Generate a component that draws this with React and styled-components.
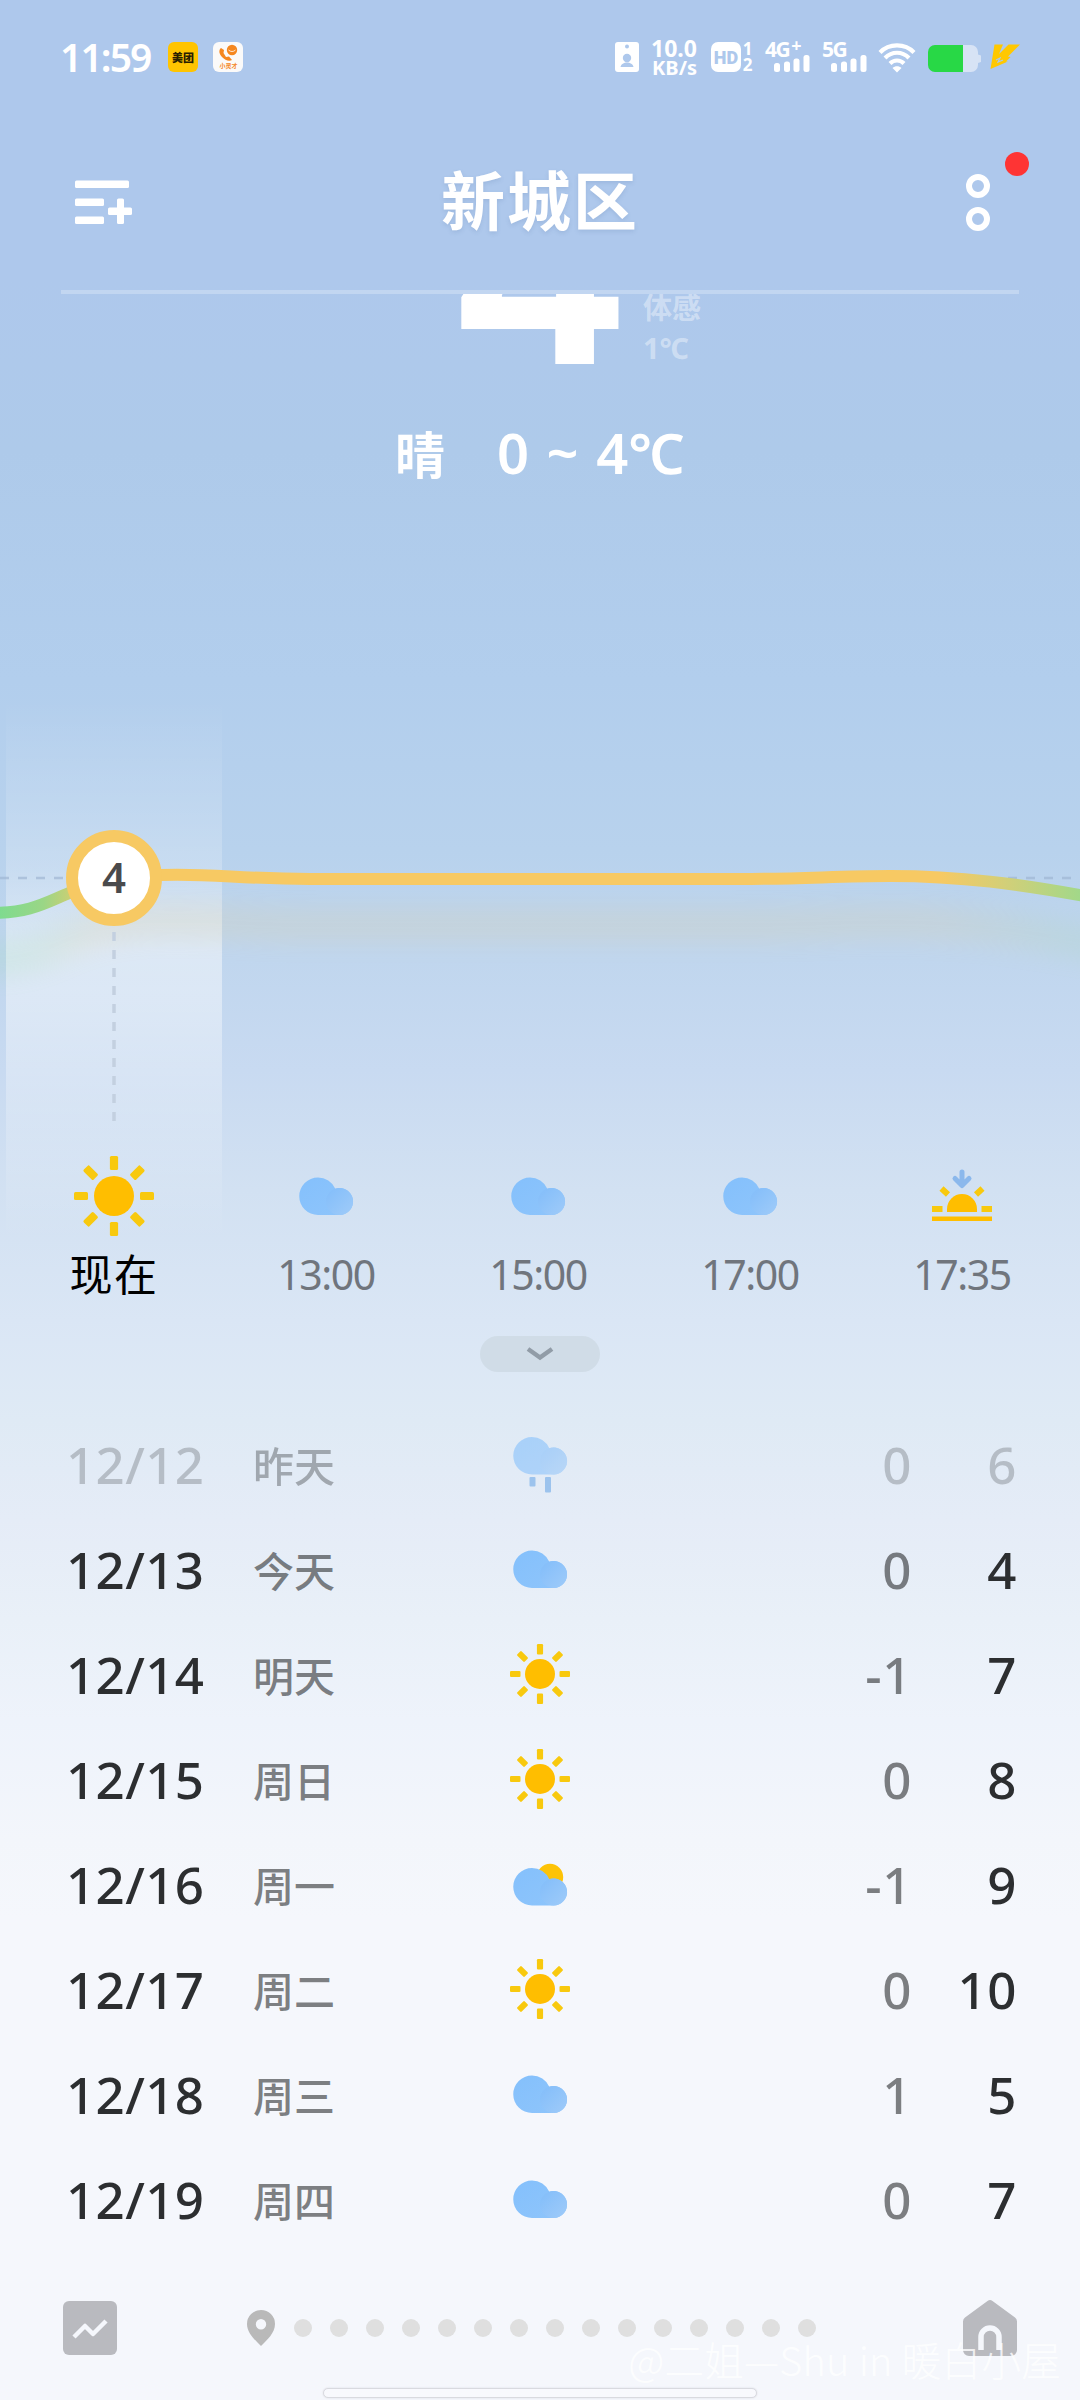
import styled, { createGlobalStyle } from 'styled-components';

const GlobalStyle = createGlobalStyle`
  * { box-sizing: border-box; }

  body {
    margin: 0;
    font-family: 'Noto Sans', 'Noto Sans CJK SC', sans-serif;
  }

  svg { display: block; }
`;

const Page = styled.main`
  position: relative;
  display: flex;
  flex-direction: column;
  width: 1080px;
  height: 2400px;
  overflow: hidden;
  background: linear-gradient(
    #aec8ec 0,
    #aec8ec 280px,
    #aecaea 450px,
    #b2ceed 680px,
    #b8d2ed 850px,
    #c0d6ee 960px,
    #c8daf1 1070px,
    #d2e1f2 1190px,
    #dae6f5 1320px,
    #dfeaf5 1420px,
    #e5ecf7 1520px,
    #e9f0f8 1620px,
    #eef3fb 1720px,
    #f3f6fb 1840px,
    #f5f7fc 1920px
  );
`;

/* status bar */

const StatusBar = styled.div`
  display: flex;
  flex: none;
  align-items: flex-start;
  height: 114px;
  padding: 38px 60px 0;
  color: #fff;
`;

const Clock = styled.span`
  width: 108px;
  font-size: 39px;
  font-weight: 600;
  line-height: 38px;
  letter-spacing: -1.9px;
  white-space: nowrap;
`;

const AppBadge = styled.span`
  display: flex;
  align-items: center;
  justify-content: center;
  width: 30px;
  height: 30px;
  margin: 4px 15px 0 0;
  border-radius: 6px;
  background: ${({ $color }) => $color};
  color: #2a2000;
  font-size: 11px;
  font-weight: 900;
  line-height: 1;
`;

const StatusIcons = styled.div`
  display: flex;
  flex: none;
  align-items: flex-start;
  height: 40px;
  margin-left: auto;

  > * { flex: none; }
`;

const NetSpeed = styled.div`
  display: flex;
  flex-direction: column;
  align-items: flex-end;
  width: 58px;
  font-weight: 700;
  white-space: nowrap;

  span:first-child {
    font-size: 23px;
    line-height: 20px;
  }

  span:last-child {
    font-size: 20px;
    line-height: 19px;
  }
`;

const HdBadge = styled.div`
  width: 30px;
  height: 30px;
  margin: 4px 1px 0 14px;
  border-radius: 7px;
  background: #fff;
  color: #aec8ec;
  font-family: Roboto, sans-serif;
  font-size: 18px;
  font-weight: 900;
  line-height: 31px;
  text-align: center;
`;

const SimNumbers = styled.div`
  display: flex;
  flex-direction: column;
  align-items: center;
  width: 11px;
  padding-top: 3px;
  font-size: 17px;
  font-weight: 700;
  line-height: 16px;
`;

const Signal = styled.div`
  width: 45px;
  margin-left: 12px;

  svg { margin: -6px 0 0 9px; }
`;

const SignalLabel = styled.div`
  display: flex;
  height: 23px;
  font-size: 21px;
  font-weight: 700;
  line-height: 23px;
  letter-spacing: -1.5px;

  sup {
    margin: -4px 0 0 2px;
    font-size: 18px;
    line-height: 23px;
  }
`;

const WifiIcon = styled.svg`
  margin: 0 3px 0 11px;
`;

/* header */

const Header = styled.header`
  display: grid;
  flex: none;
  grid-template-columns: 60px 1fr 60px;
  align-items: center;
  height: 176px;
  padding: 0 72px;
`;

const Title = styled.h1`
  margin: -3px 0 0;
  color: #fff;
  font-size: 64px;
  font-weight: 700;
  line-height: 80px;
  letter-spacing: 2px;
  text-align: center;
  text-shadow: 0 2px 4px rgba(80, 110, 160, 0.18);
`;

const MenuButton = styled.div`
  position: relative;
  display: flex;
  justify-content: flex-end;
  padding: 2px 18px 0 0;
`;

const RedDot = styled.i`
  position: absolute;
  top: -20px;
  right: -21px;
  width: 24px;
  height: 24px;
  border-radius: 50%;
  background: #fe3434;
`;

const Divider = styled.div`
  flex: none;
  height: 4px;
  margin: 0 61px;
  background: rgba(255, 255, 255, 0.25);
`;

/* current weather */

const Current = styled.section`
  flex: none;
  height: 406px;
  overflow: hidden;
  color: #fff;
`;

const CurrentTemp = styled.div`
  display: flex;
  height: 106px;
  padding-left: 448px;
`;

const BigDegree = styled.span`
  width: 195px;
  margin-top: -178px;
  font-family: Inter, sans-serif;
  font-size: 270px;
  font-weight: 700;
  line-height: 300px;
`;

const FeelsLike = styled.div`
  margin-top: -6px;
  color: rgba(255, 255, 255, 0.4);
  font-size: 29px;
  font-weight: 700;
  line-height: 40px;
`;

const Summary = styled.div`
  display: flex;
  align-items: baseline;
  padding-left: 395px;
  font-size: 56px;
  font-weight: 600;
  line-height: 104px;
  white-space: pre;
  word-spacing: 3px;
`;

const SummaryText = styled.span`
  width: 102px;
  font-size: 50px;
`;

/* hourly */

const Hourly = styled.section`
  position: relative;
  flex: none;
  height: 636px;
`;

const NowHighlight = styled.div`
  position: absolute;
  top: 0;
  left: 6px;
  width: 216px;
  height: 540px;
  background: linear-gradient(
    rgba(255, 255, 255, 0) 0,
    rgba(255, 255, 255, 0.22) 170px,
    rgba(255, 255, 255, 0.45) 250px,
    rgba(255, 255, 255, 0.42) 300px,
    rgba(255, 255, 255, 0) 540px
  );
`;

const Chart = styled.svg`
  position: relative;
`;

const Hours = styled.div`
  position: relative;
  display: grid;
  grid-template-columns: repeat(5, 212px);
  padding-left: 8px;
`;

const Hour = styled.div`
  display: flex;
  flex-direction: column;
  align-items: center;
  color: ${({ $now }) => ($now ? '#000' : '#70757d')};
  font-size: ${({ $now }) => ($now ? 43 : 41)}px;
  line-height: 77px;
  letter-spacing: ${({ $now }) => ($now ? 1.5 : -1.5)}px;
`;

const Expand = styled.div`
  display: flex;
  flex: none;
  align-items: center;
  justify-content: center;
  width: 120px;
  height: 36px;
  margin: 0 auto 42px;
  border-radius: 18px;
  background: #d0dce7;
`;

/* daily */

const Daily = styled.section`
  flex: none;
`;

const Day = styled.div`
  display: grid;
  grid-template-columns: 187px 247px 80px 332px 105px;
  align-items: center;
  height: 105px;
  padding-left: 66px;
  color: #2c2e30;
  font-size: 51px;
  font-weight: 500;
  line-height: 60px;
`;

const DayDate = styled.span`
  margin-top: -5px;
  letter-spacing: 0.4px;
  opacity: ${({ $past }) => ($past ? 0.24 : 1)};
`;

const Weekday = styled.span`
  margin-top: -1px;
  color: rgba(44, 46, 48, 0.6);
  font-size: 41px;
  opacity: ${({ $past }) => ($past ? 0.6 : 1)};
`;

const DayIcon = styled.div`
  margin-top: -6px;
  opacity: ${({ $past }) => ($past ? 0.6 : 1)};
`;

const Degree = styled.span`
  margin-top: -5px;
  text-align: right;
  letter-spacing: 0.6px;
`;

const Low = styled(Degree)`
  opacity: ${({ $past }) => ($past ? 0.24 : 0.6)};
`;

const High = styled(Degree)`
  opacity: ${({ $past }) => ($past ? 0.24 : 1)};
`;

/* footer */

const Footer = styled.footer`
  display: flex;
  flex: none;
  align-items: center;
  height: 148px;
  padding: 0 63px;
`;

const Pager = styled.div`
  display: flex;
  align-items: center;
  gap: 18px;
  margin: 0 auto 0 130px;

  svg { margin-right: 1px; }
`;

const PageDot = styled.i`
  width: 18px;
  height: 18px;
  border-radius: 50%;
  background: #dfdfdf;
`;

const GestureBar = styled.div`
  position: absolute;
  bottom: 2px;
  left: 323px;
  width: 434px;
  height: 10px;
  border: 1px solid #d9dae0;
  border-radius: 5px;
  background: #f8f9fd;
  box-shadow: 0 0 2px #d9dae0;
`;

const Watermark = styled.div`
  position: absolute;
  right: 19px;
  bottom: 13px;
  color: rgba(255, 255, 255, 0.8);
  font-family: 'Noto Sans CJK SC', sans-serif;
  font-size: 39.5px;
  font-weight: 300;
  line-height: 56px;
  letter-spacing: 0.3px;
  white-space: nowrap;
`;

function Sun({ scale = 1 }) {
  return (
    <g transform={`translate(40 40) scale(${scale})`}>
      <circle r="20" fill="#ffbe00" />
      {[0, 45, 90, 135, 180, 225, 270, 315].map((angle) => (
        <rect
          key={angle}
          x="-4.1"
          y="-40"
          width="8.2"
          height="14"
          rx="1.5"
          fill="#f8c90e"
          transform={`rotate(${angle})`}
        />
      ))}
    </g>
  );
}

function Cloud({ y = 21.5 }) {
  return (
    <g transform={`translate(13 ${y})`}>
      <path
        d="M19 0A19 19 0 0 1 36.300 11.200A13.500 13.500 0 1 1 40.500 37.500H19A18.750 18.750 0 0 1 19 0Z"
        fill="url(#cloud)"
      />
      <circle cx="40.500" cy="24" r="13.500" fill="url(#puff)" />
    </g>
  );
}

function WeatherIcon({ type }) {
  return (
    <svg width="80" height="80" viewBox="0 0 80 80">
      {type === 'sun' && <Sun />}
      {type === 'sunSmall' && <Sun scale={0.75} />}
      {type === 'cloud' && <Cloud />}
      {type === 'partly' && (
        <>
          <circle cx="50" cy="33" r="13.200" fill="#fdc307" />
          <Cloud y={24} />
        </>
      )}
      {type === 'rain' && (
        <>
          <Cloud y={13} />
          <rect x="29.500" y="53" width="6" height="9.500" rx="1" fill="#6ea9e8" />
          <rect x="45" y="53" width="6" height="15.500" rx="1" fill="#6ea9e8" />
        </>
      )}
      {type === 'sunset' && (
        <>
          <path
            d="M40 16v13M33 22.500l7 7 7-7"
            fill="none"
            stroke="#8bb8ec"
            strokeWidth="5"
            strokeLinecap="round"
            strokeLinejoin="round"
          />
          <path d="M25 56v-3a15 15 0 0 1 30 0v3z" fill="#ffbe00" />
          <path d="M10 60.500h60v4.500H10z" fill="#ffbe00" />
          <path d="M10 50h10.500v6H10zM59.500 50h10.500v6H59.500z" fill="#f8c90e" />
          <path d="M19.500 32.500l6.500 6M60.500 32.500l-6.500 6" stroke="#f8c90e" strokeWidth="6" />
        </>
      )}
    </svg>
  );
}

const hours = [
  { label: '现在', icon: 'sun', now: true },
  { label: '13:00', icon: 'cloud' },
  { label: '15:00', icon: 'cloud' },
  { label: '17:00', icon: 'cloud' },
  { label: '17:35', icon: 'sunset' },
];

const days = [
  { date: '12/12', name: '昨天', icon: 'rain', low: 0, high: 6, past: true },
  { date: '12/13', name: '今天', icon: 'cloud', low: 0, high: 4 },
  { date: '12/14', name: '明天', icon: 'sunSmall', low: -1, high: 7 },
  { date: '12/15', name: '周日', icon: 'sunSmall', low: 0, high: 8 },
  { date: '12/16', name: '周一', icon: 'partly', low: -1, high: 9 },
  { date: '12/17', name: '周二', icon: 'sunSmall', low: 0, high: 10 },
  { date: '12/18', name: '周三', icon: 'cloud', low: 1, high: 5 },
  { date: '12/19', name: '周四', icon: 'cloud', low: 0, high: 7 },
];

const CURVE =
  'M-60 213H-10C30 213 45 203 69 193C95 182 120 176 160 175C210 173 240 179 310 179H740C800 179 840 176 890 176C960 176 1020 184 1090 197L1150 207';

function SignalBars() {
  return (
    <svg width="36" height="17" viewBox="0 0 36 17" fill="#fff">
      <rect x="0" y="8" width="6" height="9" rx="2.500" />
      <rect x="10" y="6.500" width="6" height="10.500" rx="2.500" />
      <rect x="19.500" y="3.500" width="6" height="13.500" rx="2.500" />
      <rect x="29.500" y="0" width="6" height="17" rx="2.500" />
    </svg>
  );
}

function TemperatureChart() {
  return (
    <Chart width="1080" height="456" viewBox="0 0 1080 456" fill="none">
      <defs>
        <linearGradient id="temp" gradientUnits="userSpaceOnUse" x1="0" y1="0" x2="1080" y2="0">
          <stop offset="0" stopColor="#7fdb8f" />
          <stop offset="0.04" stopColor="#9ad686" />
          <stop offset="0.09" stopColor="#f7c963" />
          <stop offset="0.87" stopColor="#f7c963" />
          <stop offset="0.93" stopColor="#d3cf78" />
          <stop offset="1" stopColor="#a2d889" />
        </linearGradient>
        <linearGradient id="cloud" x1="0" y1="0" x2="1" y2="1">
          <stop offset="0" stopColor="#84c0fc" />
          <stop offset="1" stopColor="#8fc5fb" />
        </linearGradient>
        <linearGradient id="puff" x1="0" y1="0" x2="1" y2="1">
          <stop offset="0" stopColor="#82bdfa" />
          <stop offset="1" stopColor="#9fcbf9" />
        </linearGradient>
        <filter id="glow" filterUnits="userSpaceOnUse" x="-100" y="120" width="1280" height="240">
          <feGaussianBlur stdDeviation="11" />
        </filter>
      </defs>
      <path
        d={CURVE}
        stroke="url(#temp)"
        strokeWidth="36"
        opacity="0.12"
        filter="url(#glow)"
        transform="translate(0 46)"
      />
      <path d="M0 178H66M1008 178H1080" stroke="#9fb6d3" strokeWidth="2.500" strokeDasharray="9 9" opacity="0.7" />
      <path d="M114 232V422" stroke="#c3d0e0" strokeWidth="3.500" strokeDasharray="9 9" />
      <path d={CURVE} stroke="url(#temp)" strokeWidth="12" />
      <circle cx="114" cy="178" r="42" fill="#fff" stroke="#f7c963" strokeWidth="12" />
      <text x="114" y="193" textAnchor="middle" fill="#4a4a4c" fontSize="42" fontWeight="600">
        4
      </text>
    </Chart>
  );
}

export default function App() {
  return (
    <Page>
      <GlobalStyle />
      <StatusBar>
        <Clock>11:59</Clock>
        <AppBadge $color="#ffc400">美团</AppBadge>
        <AppBadge $color="#fbfaf9">
          <svg width="30" height="30" viewBox="0 0 30 30">
            <path d="M8 6c-2.500 2-2 6 1 9s7 5 10 3l-3-3.500-3 .5-2.500-4 .5-3z" fill="#f5871f" />
            <circle cx="19" cy="8" r="5.200" fill="#f5871f" />
            <path d="M15.500 8c2 2 5 2 7 0" stroke="#fff" strokeWidth="0.800" fill="none" />
            <text x="15.500" y="25.500" textAnchor="middle" fontSize="6" fontWeight="700" fill="#f5871f">
              小灵才
            </text>
          </svg>
        </AppBadge>
        <StatusIcons>
          <svg width="24" height="38" viewBox="0 0 24 38">
            <rect y="4" width="24" height="30" rx="3" fill="#fff" />
            <g fill="#aec8ec">
              <circle cx="12" cy="8.500" r="2" />
              <circle cx="12" cy="20" r="4.200" />
              <path d="M5.500 29c1-6 12-6 13 0z" />
            </g>
          </svg>
          <NetSpeed>
            <span>10.0</span>
            <span>KB/s</span>
          </NetSpeed>
          <HdBadge>HD</HdBadge>
          <SimNumbers>
            <span>1</span>
            <span>2</span>
          </SimNumbers>
          <Signal>
            <SignalLabel>
              4G<sup>+</sup>
            </SignalLabel>
            <SignalBars />
          </Signal>
          <Signal>
            <SignalLabel>5G</SignalLabel>
            <SignalBars />
          </Signal>
          <WifiIcon width="38" height="38" viewBox="0 0 38 38" fill="none" stroke="#fff" strokeWidth="4.200">
            <path d="M2 14.500C11 5 27 5 36 14.500" />
            <path d="M7 20C14 13 24 13 31 20" />
            <path d="M12 25.500C16 21.500 22 21.500 26 25.500" />
            <path d="M14.500 30c2.500-2.500 6.500-2.500 9 0L19 34.500z" fill="#fff" stroke="none" />
          </WifiIcon>
          <svg width="101" height="38" viewBox="0 0 101 38">
            <path d="M44 7h8a7 7 0 0 1 7 7v2.500l3 1v6.500l-3 1v2a7 7 0 0 1-7 7h-8z" fill="#d7e3f5" />
            <path d="M16 7h28v27H16a7 7 0 0 1-7-7V14a7 7 0 0 1 7-7z" fill="#28d846" />
            <path
              d="M75.500 6.500h8.500l-4 9.500 9.500-9.500h11.500l-12 12 2.500.5-4.500 4.500h2L71.500 31z"
              fill="#ffc800"
            />
            <path d="M77 22l4-2-2 4 5-2" fill="none" stroke="#aec8ec" strokeWidth="1.200" />
          </svg>
        </StatusIcons>
      </StatusBar>

      <Header>
        <svg width="60" height="48" viewBox="0 0 60 48" fill="#fff">
          <rect x="3" y="2.500" width="54" height="7.500" rx="1.500" />
          <rect x="3" y="20.500" width="29" height="7.500" rx="1.500" />
          <rect x="3" y="38.500" width="29" height="7.500" rx="1.500" />
          <rect x="36" y="29.500" width="24" height="7.500" rx="1.500" />
          <rect x="45" y="20.500" width="7" height="25.500" rx="1.500" />
        </svg>
        <Title>新城区</Title>
        <MenuButton>
          <svg width="24" height="58" viewBox="0 0 24 58" fill="none" stroke="#fff" strokeWidth="6">
            <circle cx="12" cy="12" r="9" />
            <circle cx="12" cy="45" r="9" />
          </svg>
          <RedDot />
        </MenuButton>
      </Header>
      <Divider />

      <Current>
        <CurrentTemp>
          <BigDegree>4</BigDegree>
          <FeelsLike>
            体感
            <br />
            1℃
          </FeelsLike>
        </CurrentTemp>
        <Summary>
          <SummaryText>晴</SummaryText>0 ~ 4℃
        </Summary>
      </Current>

      <Hourly>
        <NowHighlight />
        <TemperatureChart />
        <Hours>
          {hours.map(({ label, icon, now }) => (
            <Hour key={label} $now={now}>
              <WeatherIcon type={icon} />
              {label}
            </Hour>
          ))}
        </Hours>
      </Hourly>

      <Expand>
        <svg width="30" height="16" viewBox="0 0 30 16" fill="none" stroke="#919ca7" strokeWidth="4.500">
          <path d="M3 3l12 8.500L27 3" />
        </svg>
      </Expand>

      <Daily>
        {days.map(({ date, name, icon, low, high, past }) => (
          <Day key={date}>
            <DayDate $past={past}>{date}</DayDate>
            <Weekday $past={past}>{name}</Weekday>
            <DayIcon $past={past}>
              <WeatherIcon type={icon} />
            </DayIcon>
            <Low $past={past}>{low}</Low>
            <High $past={past}>{high}</High>
          </Day>
        ))}
      </Daily>

      <Footer>
        <svg width="54" height="54" viewBox="0 0 54 54">
          <rect width="54" height="54" rx="6" fill="#b9babf" />
          <path
            d="M11 36l11-11 8 8 13-13"
            fill="none"
            stroke="#f5f7fc"
            strokeWidth="4.500"
            strokeLinejoin="round"
          />
        </svg>
        <Pager>
          <svg width="28" height="36" viewBox="0 0 28 36">
            <path
              d="M14 0a14 14 0 0 1 14 14c0 9-8 16-14 22C8 30 0 23 0 14A14 14 0 0 1 14 0zm0 9a5.200 5.200 0 1 0 0 10.400A5.200 5.200 0 0 0 14 9z"
              fill="#b9b9b9"
            />
          </svg>
          {Array.from({ length: 15 }, (_, i) => (
            <PageDot key={i} />
          ))}
        </Pager>
        <svg width="54" height="58" viewBox="0 0 54 58">
          <path
            d="M24.500 2q2.500-2 5 0L52 18.500q2 1.500 2 4V51a6 6 0 0 1-6 6H6a6 6 0 0 1-6-6V22.500q0-2.500 2-4z"
            fill="#b9babf"
          />
          <path d="M18 51V38a9 9 0 0 1 18 0v13" fill="none" stroke="#f5f7fc" strokeWidth="5.500" />
        </svg>
      </Footer>
      <GestureBar />
      <Watermark>@二姐—Shu in 暖白小屋</Watermark>
    </Page>
  );
}
